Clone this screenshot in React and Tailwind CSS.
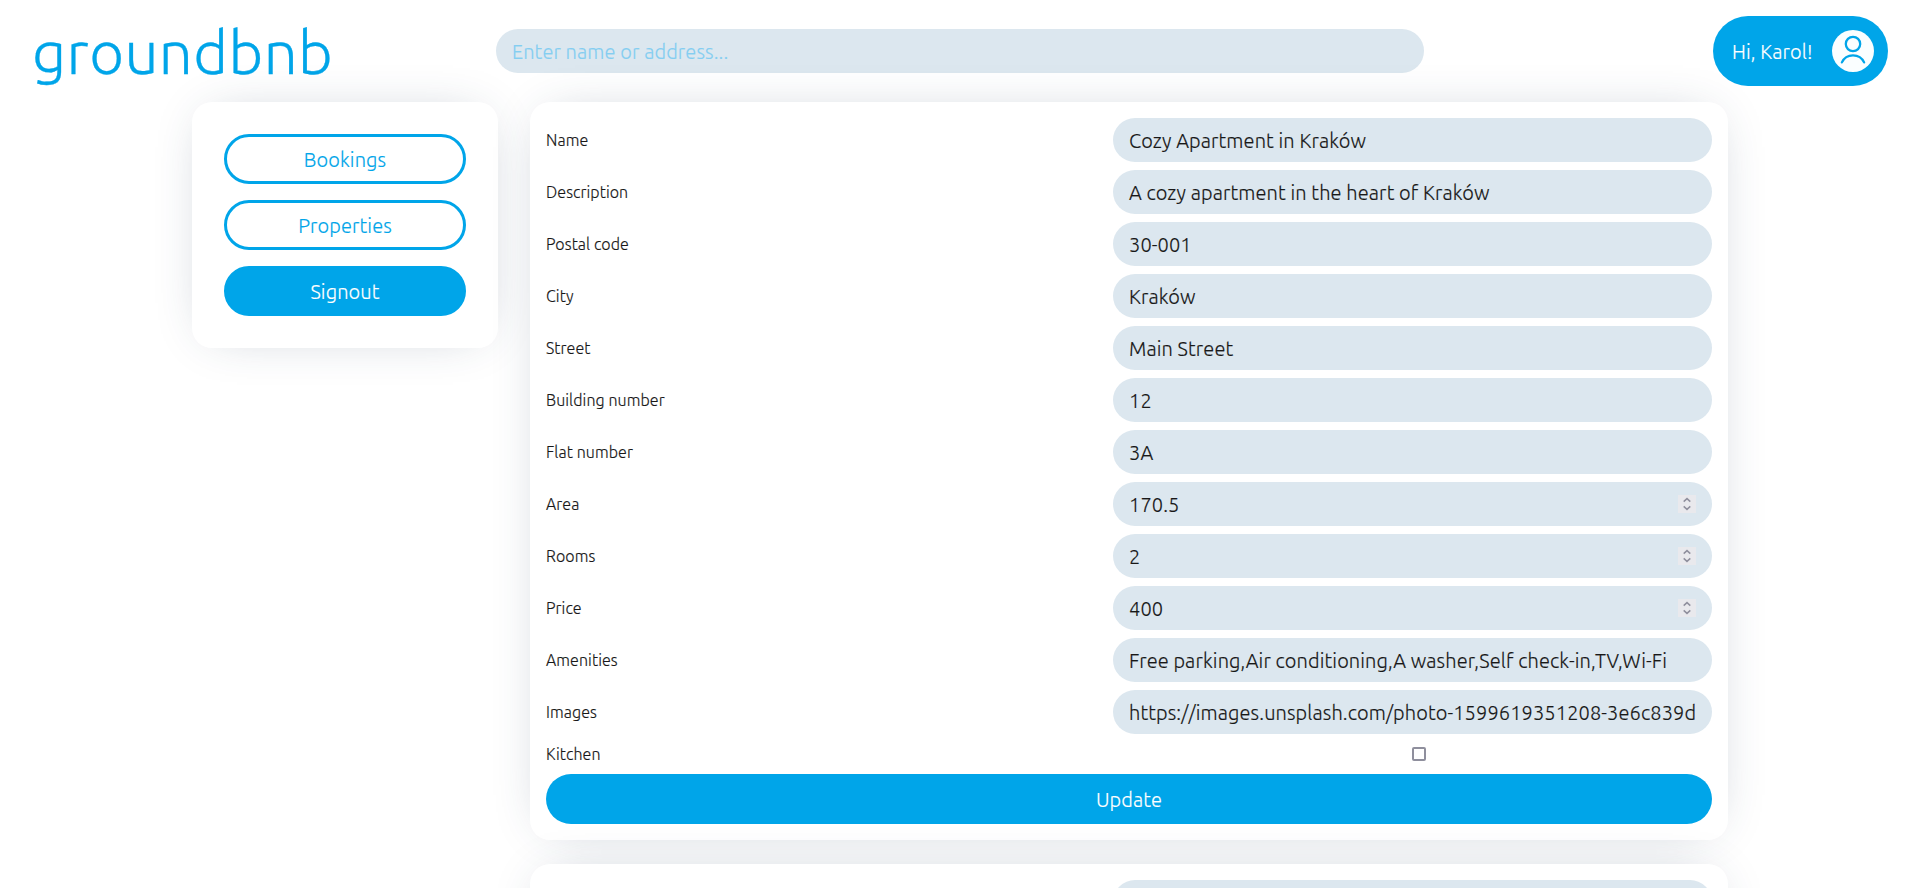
const FIELDS = [
  { label: "Name", value: "Cozy Apartment in Kraków" },
  { label: "Description", value: "A cozy apartment in the heart of Kraków" },
  { label: "Postal code", value: "30-001" },
  { label: "City", value: "Kraków" },
  { label: "Street", value: "Main Street" },
  { label: "Building number", value: "12" },
  { label: "Flat number", value: "3A" },
  { label: "Area", value: "170.5", numeric: true },
  { label: "Rooms", value: "2", numeric: true },
  { label: "Price", value: "400", numeric: true },
  { label: "Amenities", value: "Free parking,Air conditioning,A washer,Self check-in,TV,Wi-Fi" },
  { label: "Images", value: "https://images.unsplash.com/photo-1599619351208-3e6c839d" },
];

function Spinner() {
  return (
    <span className="flex h-[18px] w-[18px] shrink-0 items-center justify-center bg-[#e9e9ed]">
      <svg width="18" height="18" viewBox="0 0 18 18" fill="none" stroke="#8f8f9d" strokeWidth="1.5">
        <path d="M5.7 6.6 9 3.6l3.3 3M5.7 11.4l3.3 3 3.3-3" />
      </svg>
    </span>
  );
}

function Field({ label, value, numeric }) {
  return (
    <div className="flex items-center justify-between">
      <span className="text-base leading-6 tracking-[0.08px]">{label}</span>
      <div className="flex h-11 w-[599px] items-center justify-between overflow-hidden rounded-full bg-[#dce7ef] px-4">
        <span className="whitespace-nowrap pt-0.5 text-xl leading-7">{value}</span>
        {numeric && <Spinner />}
      </div>
    </div>
  );
}

function Card({ className, children }) {
  return (
    <section className={`rounded-[20px] bg-white shadow-[0_0_50px_-20px_rgba(40,60,90,0.33)] ${className}`}>
      {children}
    </section>
  );
}

function SideButton({ filled, children }) {
  return (
    <button
      className={`h-[50px] w-full rounded-full border-3 border-[#00a5e9] pt-0.5 text-xl ${
        filled ? "bg-[#00a5e9] text-white" : "bg-white text-[#00a5e9]"
      }`}
    >
      {children}
    </button>
  );
}

export default function App() {
  return (
    <div className="flex h-[888px] w-full flex-col overflow-hidden bg-white font-[Ubuntu,'Noto_Sans',sans-serif] font-light tracking-[0.11px] text-[#181818] [-webkit-text-stroke-width:0.15px]">
      <header className="flex h-[102px] shrink-0 items-center justify-between px-8">
        <h1 className="w-[464px] pt-0.5 text-[60px] leading-none tracking-[0.45px] text-[#00a5e9] [-webkit-text-stroke-width:0.3px]">
          groundbnb
        </h1>
        <div className="flex h-11 w-[928px] items-center rounded-full bg-[#dce7ef] px-4">
          <span className="pt-0.5 text-xl leading-7 text-[#84cef1]">Enter name or address...</span>
        </div>
        <div className="flex w-[464px] justify-end">
          <button className="flex h-[70px] w-[175px] items-center justify-between rounded-full bg-[#00a5e9] pr-3.5 pl-[19px] text-xl text-white">
            <span className="pt-0.5">Hi, Karol!</span>
            <svg width="42" height="42" viewBox="0 0 42 42" fill="none">
              <circle cx="21" cy="21" r="21" fill="#fafeff" />
              <g stroke="#00a5e9" strokeWidth="2.3" strokeLinecap="round">
                <circle cx="21" cy="14" r="7.2" />
                <path d="M9.9 32.4C11.8 28.2 16.1 25.3 21 25.3s9.2 2.9 11.1 7.1" />
              </g>
            </svg>
          </button>
        </div>
      </header>
      <main className="mx-auto flex w-[1536px] items-start gap-8">
        <Card className="flex w-[306px] flex-col gap-4 p-8">
          <SideButton>Bookings</SideButton>
          <SideButton>Properties</SideButton>
          <SideButton filled>Signout</SideButton>
        </Card>
        <div className="flex w-[1198px] flex-col gap-6">
          <Card className="flex flex-col gap-2 p-4">
            {FIELDS.map((f) => (
              <Field key={f.label} {...f} />
            ))}
            <div className="flex h-6 items-center justify-between">
              <span className="text-base leading-6 tracking-[0.08px]">Kitchen</span>
              <div className="flex w-[599px] justify-center pl-[13px]">
                <span className="h-3.5 w-3.5 rounded-xs border-2 border-[#8f8f9d] bg-white" />
              </div>
            </div>
            <button className="h-[50px] rounded-full bg-[#00a5e9] pt-0.5 text-xl text-white">Update</button>
          </Card>
          <Card className="h-[738px] p-4">
            <div className="ml-auto h-11 w-[599px] rounded-full bg-[#dce7ef]" />
          </Card>
        </div>
      </main>
    </div>
  );
}
